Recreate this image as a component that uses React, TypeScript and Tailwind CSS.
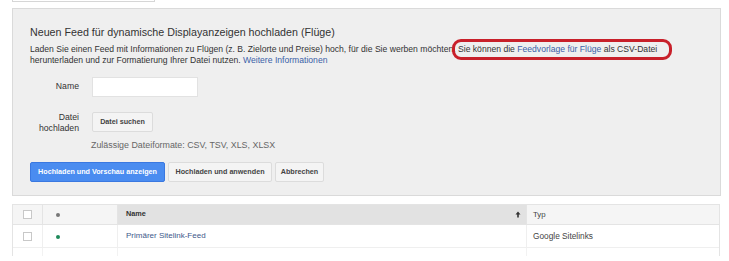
import React from 'react';

const font = { fontFamily: '"Liberation Sans", Arial, sans-serif' };

function Checkbox() {
  return <span className="block h-[9px] w-[9px] border border-[#c8c8c8] bg-white" />;
}

export default function App() {
  return (
    <div className="relative h-[261px] w-[729px] overflow-hidden bg-white text-[#333]" style={font}>
      <div className="ml-[12px] h-[2px] w-[143px] border-x border-b border-[#d6d6d6]" />

      {/* upload panel */}
      <div className="ml-[12px] mt-[6px] h-[188px] w-[709px] border border-[#dadada] bg-[#efefef] pl-[17px]">
        <h2 className="mt-[15px] text-[10.7px] leading-[16px] text-[#333]">
          Neuen Feed für dynamische Displayanzeigen hochladen (Flüge)
        </h2>
        <p className="mt-[4px] text-[8.6px] leading-[11px] text-[#333]">
          Laden Sie einen Feed mit Informationen zu Flügen (z. B. Zielorte und Preise) hoch, für die Sie werben möchten.{' '}
          <span className="relative">
            Sie können die <span className="text-[#3b5fa8]">Feedvorlage für Flüge</span> als CSV-Datei
            <span className="absolute -left-[6px] -right-[15px] -top-[5px] -bottom-[6px] rounded-[9px] border-[3px] border-[#c8202a]" />
          </span>
          <br />
          herunterladen und zur Formatierung Ihrer Datei nutzen.{' '}
          <span className="text-[#3b5fa8]">Weitere Informationen</span>
        </p>

        <div className="mt-[11px] flex items-center">
          <div className="w-[49px] text-right text-[8.7px]">Name</div>
          <div className="ml-[13px] h-[20px] w-[106px] border border-[#e2e2e2] bg-white" />
        </div>

        <div className="mt-[15px] flex items-start">
          <div className="w-[49px] text-right text-[8.7px] leading-[11px]">
            Datei
            <br />
            hochladen
          </div>
          <button className="ml-[13px] h-[20px] w-[61px] rounded-[2px] border border-[#dcdcdc] bg-[#f4f4f4] text-[7.2px] font-bold text-[#444]">
            Datei suchen
          </button>
        </div>
        <div className="ml-[61px] mt-[5px] text-[8.9px] leading-[12px] text-[#666]">
          Zulässige Dateiformate: CSV, TSV, XLS, XLSX
        </div>

        <div className="mt-[11px] flex gap-[3px]">
          <button className="h-[20px] w-[135px] rounded-[2px] border border-[#3a78e0] bg-[#4a8cf0] text-[7.2px] font-bold text-white">
            Hochladen und Vorschau anzeigen
          </button>
          <button className="h-[20px] w-[104px] rounded-[2px] border border-[#dcdcdc] bg-[#f4f4f4] text-[7.2px] font-bold text-[#444]">
            Hochladen und anwenden
          </button>
          <button className="h-[20px] w-[49px] rounded-[2px] border border-[#dcdcdc] bg-[#f4f4f4] text-[7.2px] font-bold text-[#444]">
            Abbrechen
          </button>
        </div>
      </div>

      {/* feeds table */}
      <div className="ml-[12px] mt-[8px] w-[708px] border-x border-t border-[#e4e4e4]">
        <div className="flex h-[20px] items-center border-b border-[#e4e4e4] bg-[#f5f5f5]">
          <div className="flex h-full w-[30px] items-center justify-center border-r border-[#e4e4e4]">
            <Checkbox />
          </div>
          <div className="flex h-full w-[75px] items-center border-r border-[#e4e4e4] pl-[13px]">
            <span className="h-[4px] w-[4px] rounded-full bg-[#777]" />
          </div>
          <div className="flex h-full w-[408px] items-center justify-between bg-[#e2e2e2] pl-[8px] pr-[5px] font-bold text-[#333]">
            <span className="text-[7.3px]">Name</span>
            <svg width="6" height="7" viewBox="0 0 6 7">
              <path d="M3 0.5 L5.5 3.5 H3.8 V6.5 H2.2 V3.5 H0.5 Z" fill="#333" />
            </svg>
          </div>
          <div className="flex h-full flex-1 items-center border-l border-[#e4e4e4] pl-[6px] text-[7.8px] text-[#444]">Typ</div>
        </div>
        <div className="flex h-[23px] items-center border-b border-[#efefef]">
          <div className="flex h-full w-[30px] items-center justify-center border-r border-[#efefef]">
            <Checkbox />
          </div>
          <div className="flex h-full w-[75px] items-center border-r border-[#efefef] pl-[13px]">
            <span className="mt-[2px] h-[4px] w-[4px] rounded-full bg-[#1e8a5a]" />
          </div>
          <div className="flex h-full w-[408px] items-center pl-[8px] text-[8px] text-[#40598a]">Primärer Sitelink-Feed</div>
          <div className="flex h-full flex-1 items-center border-l border-[#efefef] pl-[6px] text-[8.3px] text-[#444]">
            Google Sitelinks
          </div>
        </div>
        <div className="flex h-[8px]">
          <div className="w-[30px] border-r border-[#f2f2f2]" />
          <div className="w-[75px] border-r border-[#f2f2f2]" />
          <div className="w-[408px]" />
          <div className="flex-1 border-l border-[#f2f2f2]" />
        </div>
      </div>
    </div>
  );
}
